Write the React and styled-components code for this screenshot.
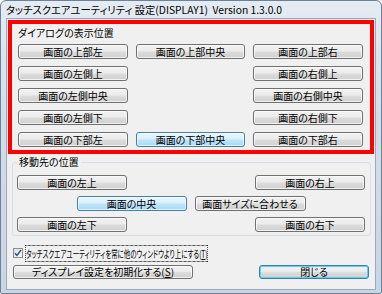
import React from 'react';
import styled, { createGlobalStyle, css } from 'styled-components';

const GlobalStyle = createGlobalStyle`
    html, body {
        margin: 0;
        padding: 0;
        background: #ffffff;
    }
    body {
        font-family: "Noto Sans CJK JP", "Noto Sans", sans-serif;
        font-size: 10px;
        color: #000;
    }
`;

const Window = styled.div`
    width: 382px;
    height: 294px;
    box-sizing: border-box;
    border: 1px solid #6f8197;
    border-radius: 6px 6px 2px 2px;
    background: linear-gradient(#e4ebf3 0%, #d3deea 40%, #c8d5e4 100%);
    display: flex;
    flex-direction: column;
    overflow: hidden;
`;

const TitleBar = styled.div`
    height: 17px;
    padding-left: 5px;
    display: flex;
    align-items: center;
    font-size: 10.3px;
    white-space: pre;
    font-feature-settings: "palt";
`;

const Client = styled.div`
    margin: 0 5px 3px 5px;
    flex: 1;
    border: 1px solid #9aa9bb;
    background: #f0f0f0;
    display: flex;
    flex-direction: column;
`;

const Highlight = styled.div`
    margin: 1px 1px 0 1px;
    border: 4px solid #ff0000;
    padding: 3px 6px 3px 6px;
`;

const Caption = styled.div`
    height: 12px;
    line-height: 12px;
    margin-bottom: 5px;
    font-feature-settings: "palt";
`;

const ButtonGrid = styled.div`
    display: grid;
    grid-template-columns: 110px 109px 110px;
    grid-auto-rows: 15px;
    column-gap: 8px;
    row-gap: 7px;
`;

const Button = styled.button`
    box-sizing: border-box;
    grid-column: ${p => p.col || 'auto'};
    grid-row: ${p => p.row || 'auto'};
    width: ${p => p.w ? `${p.w}px` : '100%'};
    height: ${p => p.h || 15}px;
    padding: 0;
    margin: 0;
    font-family: inherit;
    font-size: 10px;
    line-height: 1;
    color: #000;
    font-feature-settings: "palt";
    border: 1px solid #707070;
    border-radius: 3px;
    background: linear-gradient(#f2f2f2 0%, #ebebeb 48%, #dddddd 52%, #cfcfcf 100%);
    box-shadow: inset 0 0 0 1px rgba(255, 255, 255, 0.7);
    display: flex;
    align-items: center;
    justify-content: center;
    ${p => p.hot && css`
        border-color: #3c7fb1;
        background: linear-gradient(#eaf6fd 0%, #d9f0fc 48%, #bee6fd 52%, #a7d9f5 100%);
    `}
    ${p => p.primary && css`
        border-color: #3c7fb1;
        box-shadow: inset 0 0 0 1px #5fd0f5;
    `}
`;

const Group = styled.div`
    position: relative;
    margin: 8px 4px 0 5px;
    border: 1px solid #d5dfe5;
    border-radius: 3px;
    padding: 12px 5px 3px 4px;
    display: flex;
    flex-direction: column;
    gap: 6px;
`;

const Legend = styled.div`
    position: absolute;
    top: -7px;
    left: 4px;
    padding: 0 2px;
    line-height: 12px;
    background: #f0f0f0;
    font-feature-settings: "palt";
`;

const Row = styled.div`
    display: flex;
    justify-content: ${p => p.center ? 'center' : 'space-between'};
    gap: 8px;
`;

const CheckRow = styled.label`
    margin: 11px 0 0 6px;
    height: 12px;
    display: flex;
    align-items: center;
    gap: 3px;
`;

const CheckBox = styled.span`
    width: 8px;
    height: 8px;
    border: 1px solid #8f8f8f;
    background: linear-gradient(135deg, #dcdcdc, #fbfbfb);
    display: flex;
    align-items: center;
    justify-content: center;
`;

const CheckText = styled.span`
    display: inline-block;
    white-space: nowrap;
    outline: 1px dotted #000;
    outline-offset: 0;
    font-feature-settings: "palt";
    transform: scaleX(0.645);
    transform-origin: left center;
`;

const Footer = styled.div`
    margin: 6px 6px 0 6px;
    display: flex;
    justify-content: space-between;
`;

const App = () => {
    return (
        <>
            <GlobalStyle />
            <Window>
                <TitleBar>タッチスクエアユーティリティ 設定(DISPLAY1)  Version 1.3.0.0</TitleBar>
                <Client>
                    <Highlight>
                        <Caption>ダイアログの表示位置</Caption>
                        <ButtonGrid>
                            <Button col={1} row={1}>画面の上部左</Button>
                            <Button col={2} row={1}>画面の上部中央</Button>
                            <Button col={3} row={1}>画面の上部右</Button>
                            <Button col={1} row={2}>画面の左側上</Button>
                            <Button col={3} row={2}>画面の右側上</Button>
                            <Button col={1} row={3}>画面の左側中央</Button>
                            <Button col={3} row={3}>画面の右側中央</Button>
                            <Button col={1} row={4}>画面の左側下</Button>
                            <Button col={3} row={4}>画面の右側下</Button>
                            <Button col={1} row={5}>画面の下部左</Button>
                            <Button col={2} row={5} hot>画面の下部中央</Button>
                            <Button col={3} row={5}>画面の下部右</Button>
                        </ButtonGrid>
                    </Highlight>
                    <Group>
                        <Legend>移動先の位置</Legend>
                        <Row>
                            <Button w={110}>画面の左上</Button>
                            <Button w={110}>画面の右上</Button>
                        </Row>
                        <Row center>
                            <Button w={110} hot>画面の中央</Button>
                            <Button w={111}>画面サイズに合わせる</Button>
                        </Row>
                        <Row>
                            <Button w={110}>画面の左下</Button>
                            <Button w={110}>画面の右下</Button>
                        </Row>
                    </Group>
                    <CheckRow>
                        <CheckBox>
                            <svg width="8" height="8" viewBox="0 0 8 8">
                                <path d="M1 4.2 L3 6.5 L7 1" fill="none" stroke="#2b4f9e" strokeWidth="1.4" />
                            </svg>
                        </CheckBox>
                        <CheckText>タッチスクエアユーティリティを常に他のウィンドウより上にする(<u>T</u>)</CheckText>
                    </CheckRow>
                    <Footer>
                        <Button w={180} h={14}>ディスプレイ設定を初期化する(<u>S</u>)</Button>
                        <Button w={110} h={14} primary>閉じる</Button>
                    </Footer>
                </Client>
            </Window>
        </>
    );
};

export default App;
